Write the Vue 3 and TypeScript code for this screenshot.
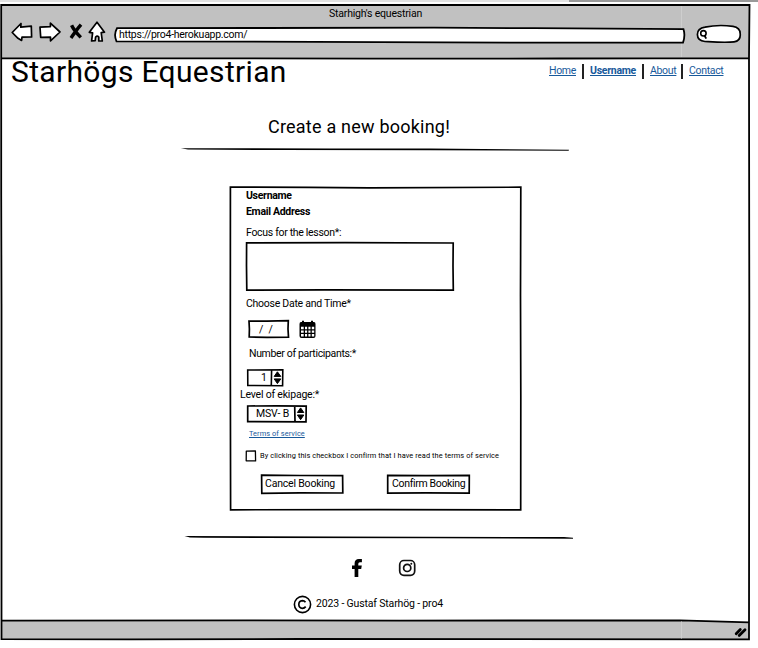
<script setup lang="ts">
import { ref } from 'vue'

interface NavLink {
  label: string
  width: number
  active?: boolean
}

const links: NavLink[] = [
  { label: 'Home', width: 27 },
  { label: 'Username', width: 46, active: true },
  { label: 'About', width: 25 },
  { label: 'Contact', width: 34.5 },
]

const address = 'https://pro4-herokuapp.com/'
const participants = ref(1)
const level = ref('MSV- B')
const accepted = ref(false)
</script>

<template>
  <div class="screen">
    <div class="strip"><span class="strip-dark"></span></div>
    <div class="window">
      <svg class="sketch" width="752" height="638" viewBox="0 0 752 638">
        <path d="M1.2 1.2H749.3V635.4H1.6Z" fill="#fff" />
        <path d="M1.2 1H749.3V54.4H1.2Z" fill="#c1c1c1" />
        <path d="M2 616.6L400 616.3L680 616.3L749 618.3V635.5H2Z" fill="#c1c1c1" />
        <path d="M1.2 1H749.5L749 54L749.3 300L749 635.4L300 635L130 635.4L1.5 635.1L1.5 300L1.2 190V1ZM1 54.2L200 54.4L370 54.6L560 54.5L749.5 54.2M2 616.6L250 616.4L400 616.6L680 616.3L749 618.3" fill="none" stroke="#000" stroke-width="1.8" />
        <path d="M681.5 2V53M681.5 617.5V634.5" stroke="#cecece" stroke-width="1" />
      </svg>

      <header class="toolbar">
        <div class="window-title">Starhigh's equestrian</div>
        <div class="controls">
          <svg class="nav-icons" width="96" height="24" viewBox="0 0 96 24">
            <g fill="#fff" stroke="#000" stroke-width="1.7" stroke-linejoin="round">
              <path d="M1.2 12.5L10 3.5L9.8 7.2L20.3 6.2L20.6 17L11 17.2L10.6 20.4L7 18.3Z" />
              <path d="M29 7.2L39.4 6.7V3.2L49 12L39.5 20.8V17.2L29.7 17.4Z" />
              <path d="M86 2.2L78.3 12.3L81.6 12.8L80.6 21L84.2 20.7L84.6 17Q86.2 15.4 87.8 17V21H91.3L90.2 12.7L93.5 12.2Z" />
            </g>
            <path d="M60.6 5.2C62.5 9.5 65.5 13 69.8 17.4M70 4.6C66 9 64 12.5 60 17.9" fill="none" stroke="#000" stroke-width="3.4" />
          </svg>
          <div class="address">
            <svg class="sketch" width="574" height="19" viewBox="0 0 574 19">
              <path d="M3 2.2L150 2L320 1.7L420 2.2L569.5 3.2Q571.5 9.5 569 16.6L400 16.7L200 15.9L2.5 15.3Q-.6 8.5 3 2.2Z" fill="#fff" stroke="#000" stroke-width="1.8" />
            </svg>
            <span class="address-text">{{ address }}</span>
          </div>
          <svg class="search" width="46" height="20" viewBox="0 0 46 20">
            <path d="M9 3.2C18 1.2 29 1.2 37 2.4Q44.3 3.6 44.2 10Q44.8 17 38 17.8C30 18.9 18 18 9 17.5Q1.5 17 1.4 10.6Q1.3 4.6 9 3.2Z" fill="#fff" stroke="#000" stroke-width="1.7" />
            <circle cx="7.4" cy="9.3" r="2.7" fill="none" stroke="#000" stroke-width="1.6" />
            <path d="M8.5 11.5L10.2 14.6" stroke="#000" stroke-width="1.8" />
          </svg>
        </div>
      </header>

      <div class="masthead">
        <h1>Starhögs Equestrian</h1>
        <nav>
          <a
            v-for="link in links"
            :key="link.label"
            :class="{ active: link.active }"
            :style="{ width: link.width + 'px' }"
          >{{ link.label }}</a>
        </nav>
      </div>

      <h2>Create a new booking!</h2>
      <svg class="rule" width="390" height="6" viewBox="0 0 390 6">
        <path d="M.8 1.3L150 1.4L250 1.6L389 2.8L388.6 3.8L250 3.2L100 3L8 2.6Z" />
      </svg>

      <form class="booking" @submit.prevent>
        <svg class="sketch" width="294" height="326" viewBox="0 0 294 326">
          <path d="M1.4 1L80 1.4L140 1.8L291.8 1.2L291.5 110L291.8 210L291.7 323.9L150 323.6L1.6 323.8L1.3 160Z" fill="#fff" stroke="#000" stroke-width="1.7" />
        </svg>
        <div class="line strong user">Username</div>
        <div class="line strong email">Email Address</div>
        <label class="line focus">Focus for the lesson*:</label>
        <div class="focus-box">
          <svg width="210" height="51" viewBox="0 0 210 51">
            <path d="M1.6 1.8L100 1.6L208.2 2L208 25L208.3 49.2L80 48.9L1.8 49.2L1.5 25Z" fill="#fff" stroke="#000" stroke-width="1.7" />
          </svg>
        </div>
        <label class="line date-label">Choose Date and Time*</label>
        <div class="date-row">
          <div class="date">
            <svg class="sketch" width="43" height="20" viewBox="0 0 43 20">
              <path d="M2 2L20 2.1L41.3 1.7L41 10L41.5 18.1L20 18.4L2.2 18L2.4 10Z" fill="#fff" stroke="#000" stroke-width="1.7" />
            </svg>
            <span class="date-text">/&nbsp; /</span>
          </div>
          <svg class="calendar" width="17" height="19" viewBox="0 0 17 19">
            <path d="M2 2H3V1Q4 .2 5 1V2H12V1Q13 .2 14 1V2H15Q16.5 2 16.5 4V16Q16.5 18 14.5 18H2.5Q.5 18 .5 16V4Q.5 2 2 2Z" />
            <path d="M2 6.8H4.7V9.2H2ZM6 6.8H8.1V9.2H6ZM9.4 6.8H11.5V9.2H9.4ZM12.8 6.8H15.2V9.2H12.8ZM2 10.5H4.7V12.8H2ZM6 10.5H8.1V12.8H6ZM9.4 10.5H11.5V12.8H9.4ZM12.8 10.5H15.2V12.8H12.8ZM2 14.1H4.7V16.4H2ZM6 14.1H8.1V16.4H6ZM9.4 14.1H11.5V16.4H9.4ZM12.8 14.1H15.2V16.4H12.8Z" fill="#fff" />
          </svg>
        </div>
        <label class="line count-label">Number of participants:*</label>
        <div class="stepper count">
          <svg class="sketch" width="38" height="19" viewBox="0 0 38 19">
            <path d="M1.7 2L36.8 1.8L36.6 17.8L1.8 17.5ZM25.6 2L25.3 17.5" fill="#fff" stroke="#000" stroke-width="1.6" />
            <path d="M28.2 8.4L31.4 3.8L34.8 8.4ZM28.2 10.9H34.8L31.4 15.6Z" stroke="#000" stroke-width="1" stroke-linejoin="round" />
          </svg>
          <span class="count-value">{{ participants }}</span>
        </div>
        <label class="line level-label">Level of ekipage:*</label>
        <div class="stepper level">
          <svg class="sketch" width="62" height="19" viewBox="0 0 62 19">
            <path d="M1.7 2L30 1.9L60.2 2.2L60 17.8L1.7 17.7ZM48.7 2L49 17.6" fill="#fff" stroke="#000" stroke-width="1.7" />
            <path d="M51.4 8.5L54.6 3.9L57.8 8.5ZM51.4 11H57.8L54.6 15.7Z" stroke="#000" stroke-width="1" stroke-linejoin="round" />
          </svg>
          <span class="level-value">{{ level }}</span>
        </div>
        <a class="terms">Terms of service</a>
        <div class="confirm" @click="accepted = !accepted">
          <svg width="12" height="12" viewBox="0 0 12 12">
            <path d="M1.3 1.1L10.4 1L10.6 10.9L1.2 10.8Z" fill="#fff" stroke="#000" stroke-width="1.3" stroke-linejoin="round" />
            <path v-if="accepted" d="M3 6L5.3 8.5L9 3.5" fill="none" stroke="#000" stroke-width="1.3" />
          </svg>
          <span>By clicking this checkbox I confirm that I have read the terms of service</span>
        </div>
        <div class="actions">
          <button type="button" class="cancel">
            <svg class="sketch" width="84" height="21" viewBox="0 0 84 21">
              <path d="M1.6 1.2L40 1.5L82.6 1.6L82.8 19L40 18.8L1.8 19.3Z" fill="#fff" stroke="#000" stroke-width="1.7" />
            </svg>
            <span>Cancel Booking</span>
          </button>
          <button type="submit" class="submit">
            <svg class="sketch" width="85" height="21" viewBox="0 0 85 21">
              <path d="M1.7 1.4L40 1.7L83.3 1.4L83.2 19.2L40 18.9L1.7 19.2Z" fill="#fff" stroke="#000" stroke-width="1.7" />
            </svg>
            <span>Confirm Booking</span>
          </button>
        </div>
      </form>

      <svg class="rule rule-bottom" width="390" height="6" viewBox="0 0 390 6">
        <path d="M.5 1.1L150 1.4L380 2.1L389 2.8L389 3.8L250 3.2L20 2.8L6 2.4Z" />
      </svg>

      <footer>
        <div class="social">
          <svg width="12" height="20" viewBox="0 0 12 20">
            <path d="M3.6 19V11H1V7.6H3.6V5.5Q3.6 1 7.9 1H10.9V4.3H8.9Q7.3 4.3 7.3 5.8V7.6H10.8L10.2 11H7.3V19Z" />
          </svg>
          <svg width="18" height="18" viewBox="0 0 18 18" fill="none" stroke="#111" stroke-width="1.7">
            <rect x="1.7" y="1.5" width="15" height="14.8" rx="4.2" />
            <circle cx="9.2" cy="8.9" r="3.6" />
            <circle cx="13.3" cy="4.8" r="1" fill="#111" stroke="none" />
          </svg>
        </div>
        <div class="copyright">
          <svg width="19" height="19" viewBox="0 0 19 19" fill="none" stroke="#000">
            <circle cx="9.5" cy="9.5" r="8.1" stroke-width="1.6" />
            <path d="M12.5 7.3Q11.3 5.7 9.4 5.7Q5.9 6 5.8 9.5Q6 13 9.4 13.3Q11.4 13.2 12.7 11.6" stroke-width="1.7" />
          </svg>
          <span>2023 - Gustaf Starhög - pro4</span>
        </div>
      </footer>

      <div class="statusbar">
        <svg width="14" height="11" viewBox="0 0 14 11">
          <path d="M2.2 6.8L6.3 2.6M5.2 8.5L11 2.7" stroke="#000" stroke-width="2.8" stroke-linecap="round" />
        </svg>
      </div>
    </div>
  </div>
</template>

<style>
body {
  margin: 0;
  background: #fff;
}
</style>

<style scoped>
.screen {
  width: 758px;
  height: 648px;
  overflow: hidden;
  background: #fff;
  color: #000;
  font: 10.5px/16px Roboto, sans-serif;
}
.strip {
  display: flex;
  justify-content: flex-end;
  height: 2px;
  margin-bottom: 2px;
  background: #e2e2e2;
}
.strip-dark {
  width: 189px;
  background: #999;
}
.window {
  position: relative;
  display: flex;
  flex-direction: column;
  width: 752px;
  height: 638px;
}
.window > * {
  flex-shrink: 0;
}
.sketch {
  position: absolute;
  top: 0;
  left: 0;
}
svg {
  display: block;
  flex-shrink: 0;
}
.toolbar,
.masthead,
h2,
.rule,
footer,
.statusbar {
  position: relative;
}
.toolbar {
  height: 55px;
}
.window-title {
  height: 15px;
  padding: 2px 0 0 329px;
  letter-spacing: -0.2px;
}
.controls {
  display: flex;
  height: 24px;
}
.nav-icons {
  margin: -1px 0 0 11px;
}
.address {
  position: relative;
  width: 574px;
  height: 19px;
  margin: 5px 0 0 7px;
}
.address-text {
  position: relative;
  display: block;
  padding: 1px 0 0 5px;
  letter-spacing: -0.26px;
}
.search {
  margin: 3px 0 0 8px;
}
.masthead {
  display: flex;
  justify-content: space-between;
  height: 44px;
  padding: 0 28.5px 0 11px;
}
h1 {
  margin: -7px 0 0;
  font-size: 30px;
  font-weight: 400;
  line-height: 39px;
  letter-spacing: 0.33px;
}
nav {
  display: flex;
  height: 16px;
  margin-top: 4px;
}
nav a {
  color: #17599b;
  letter-spacing: -0.32px;
  text-decoration: underline;
  text-underline-offset: 1px;
  white-space: nowrap;
}
nav a.active {
  font-weight: 700;
  letter-spacing: -0.26px;
}
nav a + a {
  position: relative;
  margin-left: 14px;
}
nav a + a::before {
  content: '';
  position: absolute;
  top: 1px;
  left: -8px;
  width: 2px;
  height: 15px;
  background: #222;
}
h2 {
  margin: 13px 0 0 268px;
  font-size: 18px;
  font-weight: 400;
  line-height: 22px;
  letter-spacing: 0.22px;
}
.rule {
  margin: 9px 0 0 180px;
}
.rule-bottom {
  margin: 23px 0 0 184px;
}
.booking {
  position: relative;
  width: 294px;
  height: 326px;
  margin: 33px 0 0 229px;
}
.line {
  position: relative;
  display: block;
  width: max-content;
  height: 16px;
  margin-left: 17px;
}
.strong {
  font-weight: 700;
  letter-spacing: -0.3px;
}
.user {
  padding-top: 2px;
}
.focus {
  margin-top: 5px;
  letter-spacing: -0.31px;
}
.focus-box {
  position: relative;
  margin-left: 16px;
}
.date-label {
  margin-top: 4px;
  letter-spacing: -0.26px;
}
.date-row {
  position: relative;
  display: flex;
  margin: 7px 0 0 18px;
}
.date {
  position: relative;
  width: 43px;
  height: 20px;
}
.date-text {
  position: relative;
  display: block;
  padding: 3px 0 0 12px;
}
.calendar {
  margin: 1px 0 0 9px;
}
.count-label {
  margin: 7px 0 0 20px;
  letter-spacing: -0.34px;
}
.stepper {
  position: relative;
  height: 19px;
  margin-left: 17px;
}
.stepper span {
  position: relative;
  display: block;
}
.count {
  width: 38px;
  margin-top: 6px;
}
.count-value {
  padding: 2px 0 0 15px;
}
.level-label {
  margin: 0 0 0 11px;
  letter-spacing: -0.2px;
}
.level {
  width: 62px;
  margin-top: 1px;
}
.level-value {
  padding: 2px 0 0 10px;
  letter-spacing: -0.15px;
}
.terms {
  position: relative;
  display: block;
  width: max-content;
  margin: 5px 0 0 20px;
  color: #17599b;
  font-size: 7.4px;
  line-height: 12px;
  letter-spacing: 0.07px;
  text-decoration: underline;
  text-underline-offset: 1px;
}
.confirm {
  position: relative;
  display: flex;
  align-items: center;
  gap: 3px;
  height: 12px;
  margin: 10px 0 0 16px;
  font-size: 7.4px;
  line-height: 12px;
  letter-spacing: 0.085px;
  white-space: nowrap;
}
.actions {
  position: relative;
  display: flex;
  gap: 42px;
  margin: 12px 0 0 31px;
}
.actions button {
  position: relative;
  width: 84px;
  height: 21px;
  padding: 0 0 1px 5px;
  border: 0;
  background: none;
  color: #000;
  font: inherit;
  text-align: left;
  white-space: nowrap;
}
.actions span {
  position: relative;
  letter-spacing: -0.19px;
}
.actions .submit {
  padding-left: 6px;
}
.actions .submit span {
  letter-spacing: -0.33px;
}
.social {
  display: flex;
  gap: 35px;
  margin: 17px 0 0 351px;
}
.social svg + svg {
  margin-top: 1px;
}
.copyright {
  display: flex;
  gap: 4px;
  margin: 17px 0 0 293px;
  line-height: 18px;
  letter-spacing: -0.16px;
}
.statusbar {
  display: flex;
  justify-content: flex-end;
  margin: 13px 4px 0 0;
}
</style>
